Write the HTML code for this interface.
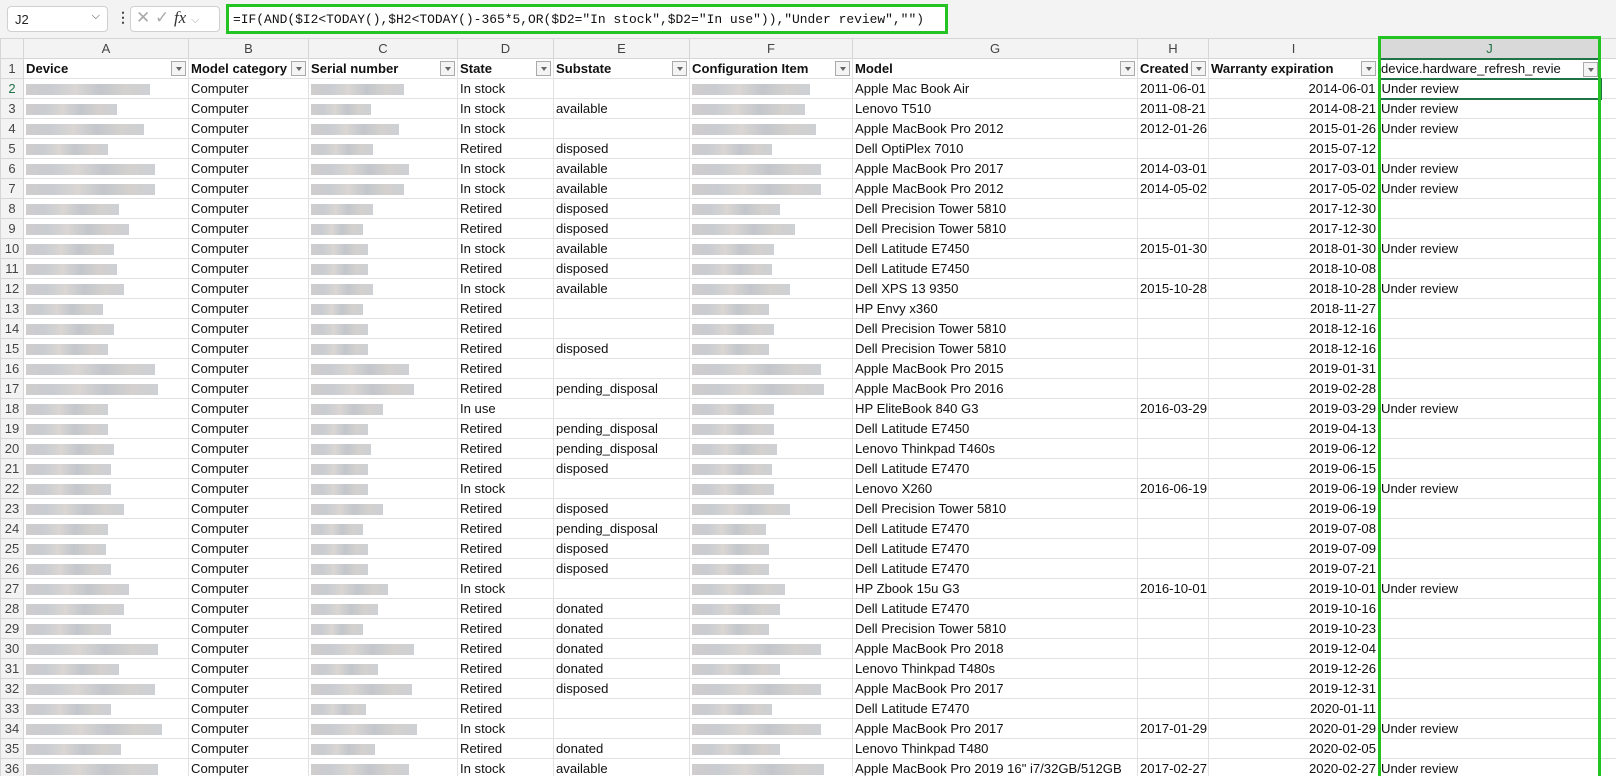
<!DOCTYPE html>
<html style="width:1616px;height:776px;overflow:hidden"><head><meta charset="utf-8"><style>
*{box-sizing:border-box;margin:0;padding:0}
body{width:1616px;height:776px;overflow:hidden;background:#fff;font-family:"Liberation Sans",sans-serif;position:relative}
.top{position:absolute;left:0;top:0;width:1616px;height:38px;background:#f3f3f3}
.nb{position:absolute;left:7px;top:6px;width:101px;height:26px;background:#fff;border:1px solid #d0d0d0;border-radius:4px;font-size:13px;padding:5px 0 0 7px;color:#222}
.nb span{position:absolute;right:7px;top:3px;font-size:11px;color:#444}
.dots{position:absolute;left:116px;top:9px;font-size:14px;color:#444;font-weight:bold}
.fxb{position:absolute;left:130px;top:6px;width:90px;height:26px;background:#fff;border:1px solid #d0d0d0;border-radius:4px;color:#aaa;font-size:17px;padding:1px 0 0 5px}
.fml{position:absolute;left:226px;top:4px;width:722px;height:30px;border:3px solid #22c322;background:#fff;font-family:"Liberation Mono",monospace;font-size:12.95px;padding:5px 0 0 4px;color:#111;white-space:nowrap;overflow:hidden}
.wrap{position:absolute;left:0;top:38px;width:1616px;height:738px;overflow:hidden}
table{width:1660px;border-collapse:collapse;table-layout:fixed;font-size:13.1px}
td{height:20px;border:1px solid #e1e1e1;padding:0 2px;white-space:nowrap;overflow:hidden;color:#111;line-height:17px}
tr.h td{background:#f3f3f3;color:#444;text-align:center;border-color:#d6d6d6;font-size:13px}
td.n{background:#f3f3f3;color:#444;text-align:center;border-color:#d6d6d6;font-size:13px;padding:0}
tr.t td{font-weight:bold;position:relative}
tr.t td .dd{position:absolute;right:2px;top:2px;width:15px;height:15px;border:1px solid #aaa;background:#f4f4f4}
tr.t td .dd:after{content:"";position:absolute;left:3.5px;top:5px;border-left:3.5px solid transparent;border-right:3.5px solid transparent;border-top:4px solid #666}
.r{text-align:right}
.bl{display:inline-block;height:11px;vertical-align:middle;background:linear-gradient(90deg,#c8c4c4,#bfc3c9 20%,#d3cfcc 40%,#b8bcc2 60%,#ccc9c6 80%,#c4c7cc);opacity:.85}
.gbox{position:absolute;left:1378px;top:36px;width:223px;height:740px;border:3px solid #22c322;border-bottom:none}
</style></head><body>
<div class="top">
<div class="nb">J2<span>⌵</span></div>
<div class="dots">⋮</div>
<div class="fxb">✕ ✓ <i style="font-family:'Liberation Serif',serif;color:#333">fx</i> <span style="font-size:11px">⌵</span></div>
<div class="fml">=IF(AND($I2&lt;TODAY(),$H2&lt;TODAY()-365*5,OR($D2="In stock",$D2="In use")),"Under review","")</div>
</div>
<div class="wrap">
<table>
<colgroup><col style="width:23px"><col style="width:165px"><col style="width:120px"><col style="width:149px"><col style="width:96px"><col style="width:136px"><col style="width:163px"><col style="width:285px"><col style="width:71px"><col style="width:170px"><col style="width:222px"><col style="width:60px"></colgroup>
<tr class="h"><td></td><td>A</td><td>B</td><td>C</td><td>D</td><td>E</td><td>F</td><td>G</td><td>H</td><td>I</td><td style="background:#d9d9d9;color:#217346;border-bottom:2px solid #217346">J</td><td></td></tr>
<tr class="t"><td class="n" style="font-weight:normal">1</td><td>Device<span class="dd"></span></td><td>Model category<span class="dd"></span></td><td>Serial number<span class="dd"></span></td><td>State<span class="dd"></span></td><td>Substate<span class="dd"></span></td><td>Configuration Item<span class="dd"></span></td><td>Model<span class="dd"></span></td><td>Created<span class="dd"></span></td><td>Warranty expiration<span class="dd"></span></td><td style="font-weight:normal">device.hardware_refresh_revie<span class="dd"></span></td><td></td></tr>
<tr><td class="n" style="color:#217346">2</td><td><span class="bl" style="width:124px"></span></td><td>Computer</td><td><span class="bl" style="width:93px"></span></td><td>In stock</td><td></td><td><span class="bl" style="width:118px"></span></td><td>Apple Mac Book Air</td><td>2011-06-01</td><td class="r">2014-06-01</td><td style="border:2px solid #217346">Under review</td><td></td></tr>
<tr><td class="n">3</td><td><span class="bl" style="width:91px"></span></td><td>Computer</td><td><span class="bl" style="width:60px"></span></td><td>In stock</td><td>available</td><td><span class="bl" style="width:113px"></span></td><td>Lenovo T510</td><td>2011-08-21</td><td class="r">2014-08-21</td><td>Under review</td><td></td></tr>
<tr><td class="n">4</td><td><span class="bl" style="width:118px"></span></td><td>Computer</td><td><span class="bl" style="width:88px"></span></td><td>In stock</td><td></td><td><span class="bl" style="width:124px"></span></td><td>Apple MacBook Pro 2012</td><td>2012-01-26</td><td class="r">2015-01-26</td><td>Under review</td><td></td></tr>
<tr><td class="n">5</td><td><span class="bl" style="width:82px"></span></td><td>Computer</td><td><span class="bl" style="width:62px"></span></td><td>Retired</td><td>disposed</td><td><span class="bl" style="width:80px"></span></td><td>Dell OptiPlex 7010</td><td></td><td class="r">2015-07-12</td><td></td><td></td></tr>
<tr><td class="n">6</td><td><span class="bl" style="width:129px"></span></td><td>Computer</td><td><span class="bl" style="width:98px"></span></td><td>In stock</td><td>available</td><td><span class="bl" style="width:129px"></span></td><td>Apple MacBook Pro 2017</td><td>2014-03-01</td><td class="r">2017-03-01</td><td>Under review</td><td></td></tr>
<tr><td class="n">7</td><td><span class="bl" style="width:129px"></span></td><td>Computer</td><td><span class="bl" style="width:93px"></span></td><td>In stock</td><td>available</td><td><span class="bl" style="width:129px"></span></td><td>Apple MacBook Pro 2012</td><td>2014-05-02</td><td class="r">2017-05-02</td><td>Under review</td><td></td></tr>
<tr><td class="n">8</td><td><span class="bl" style="width:93px"></span></td><td>Computer</td><td><span class="bl" style="width:62px"></span></td><td>Retired</td><td>disposed</td><td><span class="bl" style="width:88px"></span></td><td>Dell Precision Tower 5810</td><td></td><td class="r">2017-12-30</td><td></td><td></td></tr>
<tr><td class="n">9</td><td><span class="bl" style="width:103px"></span></td><td>Computer</td><td><span class="bl" style="width:52px"></span></td><td>Retired</td><td>disposed</td><td><span class="bl" style="width:103px"></span></td><td>Dell Precision Tower 5810</td><td></td><td class="r">2017-12-30</td><td></td><td></td></tr>
<tr><td class="n">10</td><td><span class="bl" style="width:88px"></span></td><td>Computer</td><td><span class="bl" style="width:57px"></span></td><td>In stock</td><td>available</td><td><span class="bl" style="width:82px"></span></td><td>Dell Latitude E7450</td><td>2015-01-30</td><td class="r">2018-01-30</td><td>Under review</td><td></td></tr>
<tr><td class="n">11</td><td><span class="bl" style="width:91px"></span></td><td>Computer</td><td><span class="bl" style="width:57px"></span></td><td>Retired</td><td>disposed</td><td><span class="bl" style="width:80px"></span></td><td>Dell Latitude E7450</td><td></td><td class="r">2018-10-08</td><td></td><td></td></tr>
<tr><td class="n">12</td><td><span class="bl" style="width:98px"></span></td><td>Computer</td><td><span class="bl" style="width:62px"></span></td><td>In stock</td><td>available</td><td><span class="bl" style="width:98px"></span></td><td>Dell XPS 13 9350</td><td>2015-10-28</td><td class="r">2018-10-28</td><td>Under review</td><td></td></tr>
<tr><td class="n">13</td><td><span class="bl" style="width:77px"></span></td><td>Computer</td><td><span class="bl" style="width:52px"></span></td><td>Retired</td><td></td><td><span class="bl" style="width:77px"></span></td><td>HP Envy x360</td><td></td><td class="r">2018-11-27</td><td></td><td></td></tr>
<tr><td class="n">14</td><td><span class="bl" style="width:88px"></span></td><td>Computer</td><td><span class="bl" style="width:57px"></span></td><td>Retired</td><td></td><td><span class="bl" style="width:82px"></span></td><td>Dell Precision Tower 5810</td><td></td><td class="r">2018-12-16</td><td></td><td></td></tr>
<tr><td class="n">15</td><td><span class="bl" style="width:82px"></span></td><td>Computer</td><td><span class="bl" style="width:57px"></span></td><td>Retired</td><td>disposed</td><td><span class="bl" style="width:77px"></span></td><td>Dell Precision Tower 5810</td><td></td><td class="r">2018-12-16</td><td></td><td></td></tr>
<tr><td class="n">16</td><td><span class="bl" style="width:129px"></span></td><td>Computer</td><td><span class="bl" style="width:98px"></span></td><td>Retired</td><td></td><td><span class="bl" style="width:129px"></span></td><td>Apple MacBook Pro 2015</td><td></td><td class="r">2019-01-31</td><td></td><td></td></tr>
<tr><td class="n">17</td><td><span class="bl" style="width:132px"></span></td><td>Computer</td><td><span class="bl" style="width:103px"></span></td><td>Retired</td><td>pending_disposal</td><td><span class="bl" style="width:132px"></span></td><td>Apple MacBook Pro 2016</td><td></td><td class="r">2019-02-28</td><td></td><td></td></tr>
<tr><td class="n">18</td><td><span class="bl" style="width:82px"></span></td><td>Computer</td><td><span class="bl" style="width:72px"></span></td><td>In use</td><td></td><td><span class="bl" style="width:82px"></span></td><td>HP EliteBook 840 G3</td><td>2016-03-29</td><td class="r">2019-03-29</td><td>Under review</td><td></td></tr>
<tr><td class="n">19</td><td><span class="bl" style="width:82px"></span></td><td>Computer</td><td><span class="bl" style="width:57px"></span></td><td>Retired</td><td>pending_disposal</td><td><span class="bl" style="width:82px"></span></td><td>Dell Latitude E7450</td><td></td><td class="r">2019-04-13</td><td></td><td></td></tr>
<tr><td class="n">20</td><td><span class="bl" style="width:88px"></span></td><td>Computer</td><td><span class="bl" style="width:60px"></span></td><td>Retired</td><td>pending_disposal</td><td><span class="bl" style="width:85px"></span></td><td>Lenovo Thinkpad T460s</td><td></td><td class="r">2019-06-12</td><td></td><td></td></tr>
<tr><td class="n">21</td><td><span class="bl" style="width:85px"></span></td><td>Computer</td><td><span class="bl" style="width:57px"></span></td><td>Retired</td><td>disposed</td><td><span class="bl" style="width:80px"></span></td><td>Dell Latitude E7470</td><td></td><td class="r">2019-06-15</td><td></td><td></td></tr>
<tr><td class="n">22</td><td><span class="bl" style="width:85px"></span></td><td>Computer</td><td><span class="bl" style="width:57px"></span></td><td>In stock</td><td></td><td><span class="bl" style="width:82px"></span></td><td>Lenovo X260</td><td>2016-06-19</td><td class="r">2019-06-19</td><td>Under review</td><td></td></tr>
<tr><td class="n">23</td><td><span class="bl" style="width:98px"></span></td><td>Computer</td><td><span class="bl" style="width:72px"></span></td><td>Retired</td><td>disposed</td><td><span class="bl" style="width:98px"></span></td><td>Dell Precision Tower 5810</td><td></td><td class="r">2019-06-19</td><td></td><td></td></tr>
<tr><td class="n">24</td><td><span class="bl" style="width:82px"></span></td><td>Computer</td><td><span class="bl" style="width:52px"></span></td><td>Retired</td><td>pending_disposal</td><td><span class="bl" style="width:74px"></span></td><td>Dell Latitude E7470</td><td></td><td class="r">2019-07-08</td><td></td><td></td></tr>
<tr><td class="n">25</td><td><span class="bl" style="width:80px"></span></td><td>Computer</td><td><span class="bl" style="width:57px"></span></td><td>Retired</td><td>disposed</td><td><span class="bl" style="width:77px"></span></td><td>Dell Latitude E7470</td><td></td><td class="r">2019-07-09</td><td></td><td></td></tr>
<tr><td class="n">26</td><td><span class="bl" style="width:85px"></span></td><td>Computer</td><td><span class="bl" style="width:57px"></span></td><td>Retired</td><td>disposed</td><td><span class="bl" style="width:77px"></span></td><td>Dell Latitude E7470</td><td></td><td class="r">2019-07-21</td><td></td><td></td></tr>
<tr><td class="n">27</td><td><span class="bl" style="width:103px"></span></td><td>Computer</td><td><span class="bl" style="width:77px"></span></td><td>In stock</td><td></td><td><span class="bl" style="width:93px"></span></td><td>HP Zbook 15u G3</td><td>2016-10-01</td><td class="r">2019-10-01</td><td>Under review</td><td></td></tr>
<tr><td class="n">28</td><td><span class="bl" style="width:98px"></span></td><td>Computer</td><td><span class="bl" style="width:67px"></span></td><td>Retired</td><td>donated</td><td><span class="bl" style="width:88px"></span></td><td>Dell Latitude E7470</td><td></td><td class="r">2019-10-16</td><td></td><td></td></tr>
<tr><td class="n">29</td><td><span class="bl" style="width:85px"></span></td><td>Computer</td><td><span class="bl" style="width:52px"></span></td><td>Retired</td><td>donated</td><td><span class="bl" style="width:77px"></span></td><td>Dell Precision Tower 5810</td><td></td><td class="r">2019-10-23</td><td></td><td></td></tr>
<tr><td class="n">30</td><td><span class="bl" style="width:132px"></span></td><td>Computer</td><td><span class="bl" style="width:103px"></span></td><td>Retired</td><td>donated</td><td><span class="bl" style="width:129px"></span></td><td>Apple MacBook Pro 2018</td><td></td><td class="r">2019-12-04</td><td></td><td></td></tr>
<tr><td class="n">31</td><td><span class="bl" style="width:93px"></span></td><td>Computer</td><td><span class="bl" style="width:67px"></span></td><td>Retired</td><td>donated</td><td><span class="bl" style="width:88px"></span></td><td>Lenovo Thinkpad T480s</td><td></td><td class="r">2019-12-26</td><td></td><td></td></tr>
<tr><td class="n">32</td><td><span class="bl" style="width:129px"></span></td><td>Computer</td><td><span class="bl" style="width:101px"></span></td><td>Retired</td><td>disposed</td><td><span class="bl" style="width:129px"></span></td><td>Apple MacBook Pro 2017</td><td></td><td class="r">2019-12-31</td><td></td><td></td></tr>
<tr><td class="n">33</td><td><span class="bl" style="width:85px"></span></td><td>Computer</td><td><span class="bl" style="width:55px"></span></td><td>Retired</td><td></td><td><span class="bl" style="width:80px"></span></td><td>Dell Latitude E7470</td><td></td><td class="r">2020-01-11</td><td></td><td></td></tr>
<tr><td class="n">34</td><td><span class="bl" style="width:136px"></span></td><td>Computer</td><td><span class="bl" style="width:106px"></span></td><td>In stock</td><td></td><td><span class="bl" style="width:129px"></span></td><td>Apple MacBook Pro 2017</td><td>2017-01-29</td><td class="r">2020-01-29</td><td>Under review</td><td></td></tr>
<tr><td class="n">35</td><td><span class="bl" style="width:95px"></span></td><td>Computer</td><td><span class="bl" style="width:64px"></span></td><td>Retired</td><td>donated</td><td><span class="bl" style="width:88px"></span></td><td>Lenovo Thinkpad T480</td><td></td><td class="r">2020-02-05</td><td></td><td></td></tr>
<tr><td class="n">36</td><td><span class="bl" style="width:132px"></span></td><td>Computer</td><td><span class="bl" style="width:98px"></span></td><td>In stock</td><td>available</td><td><span class="bl" style="width:132px"></span></td><td>Apple MacBook Pro 2019 16" i7/32GB/512GB</td><td>2017-02-27</td><td class="r">2020-02-27</td><td>Under review</td><td></td></tr>
<tr><td class="n">37</td><td></td><td></td><td></td><td></td><td></td><td></td><td></td><td></td><td></td><td></td><td></td></tr>
</table>
</div>
<div class="gbox"></div>
</body></html>
